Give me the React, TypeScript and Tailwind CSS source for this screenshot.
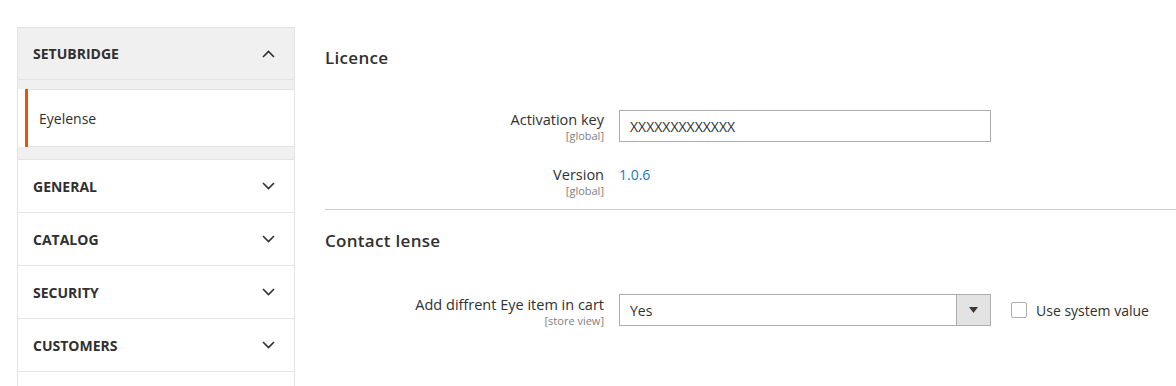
import React from "react";

const font = { fontFamily: '"Open Sans", "Noto Sans", Arial, sans-serif' };

function Chevron({ up = false }: { up?: boolean }) {
  return (
    <svg width="13" height="8" viewBox="0 0 13 8" className="shrink-0">
      <polyline
        points={up ? "1,7 6.5,1.5 12,7" : "1,1 6.5,6.5 12,1"}
        fill="none"
        stroke="#303030"
        strokeWidth="1.6"
      />
    </svg>
  );
}

const sections = ["GENERAL", "CATALOG", "SECURITY", "CUSTOMERS"];

function Sidebar() {
  return (
    <div className="w-[278px] shrink-0 border-x border-t border-[#e3e3e3] bg-white">
      {/* open section */}
      <div className="flex h-[52px] items-center justify-between bg-[#f0f0f0] pl-[15px] pr-[19px] border-b border-[#e3e3e3]">
        <span className="text-[14px] font-bold text-[#303030]">SETUBRIDGE</span>
        <Chevron up />
      </div>
      <div className="bg-[#f0f0f0] pt-[9px] pb-[12px] border-b border-[#e3e3e3]">
        <div className="flex h-[58px] bg-white">
          <div className="w-[7px]" />
          <div className="w-[3px] bg-[#eb5202]" />
          <div className="flex flex-1 items-center border-y border-[#e3e3e3] pl-[11px] text-[14px] text-[#303030]">
            Eyelense
          </div>
        </div>
      </div>
      {sections.map((s) => (
        <div
          key={s}
          className="flex h-[53px] items-center justify-between border-b border-[#e3e3e3] pl-[15px] pr-[19px]"
        >
          <span className="text-[14px] font-bold text-[#303030]">{s}</span>
          <Chevron />
        </div>
      ))}
      <div className="h-[14px]" />
    </div>
  );
}

function Label({ text, scope }: { text: string; scope: string }) {
  return (
    <div className="w-[279px] shrink-0 text-right">
      <div className="text-[14.5px] leading-[20px] text-[#303030]">{text}</div>
      <div className="text-[11px] leading-[11px] text-[#808080]">{scope}</div>
    </div>
  );
}

export default function App() {
  return (
    <div style={font} className="flex h-[386px] overflow-hidden bg-white pl-[17px] pt-[27px]">
      <Sidebar />
      <div className="-mt-[27px] ml-[30px] flex-1">
        {/* Licence */}
        <h2 className="pt-[47px] text-[17px] font-semibold leading-[22px] tracking-[0.3px] text-[#303030]">
          Licence
        </h2>
        <div className="mt-[41px] flex">
          <Label text="Activation key" scope="[global]" />
          <div className="ml-[15px] flex h-[32px] w-[372px] items-center border border-[#adadad] pl-[10px] text-[14px] text-[#303030]">
            XXXXXXXXXXXXX
          </div>
        </div>
        <div className="mt-[23px] flex">
          <Label text="Version" scope="[global]" />
          <div className="ml-[15px] text-[14px] leading-[20px] text-[#1979c3]">1.0.6</div>
        </div>
        <div className="mt-[13px] border-t border-[#cccccc]" />

        {/* Contact lense */}
        <h2 className="pt-[20px] text-[17px] font-semibold leading-[22px] tracking-[0.3px] text-[#303030]">
          Contact lense
        </h2>
        <div className="mt-[42px] flex">
          <div className="pt-[1px]">
            <Label text="Add diffrent Eye item in cart" scope="[store view]" />
          </div>
          <div className="ml-[15px] flex h-[32px] w-[372px] border border-[#adadad]">
            <div className="flex flex-1 items-center pl-[10px] text-[14px] text-[#303030]">Yes</div>
            <div className="flex w-[34px] items-center justify-center border-l border-[#adadad] bg-[#e3e3e3]">
              <svg width="9" height="6" viewBox="0 0 9 6">
                <polygon points="0,0 9,0 4.5,6" fill="#41362f" />
              </svg>
            </div>
          </div>
          <div className="ml-[20px] flex h-[32px] items-center">
            <div className="h-[16px] w-[16px] rounded-[2px] border border-[#adadad] bg-white" />
            <span className="ml-[9px] text-[14px] text-[#303030]">Use system value</span>
          </div>
        </div>
      </div>
    </div>
  );
}
